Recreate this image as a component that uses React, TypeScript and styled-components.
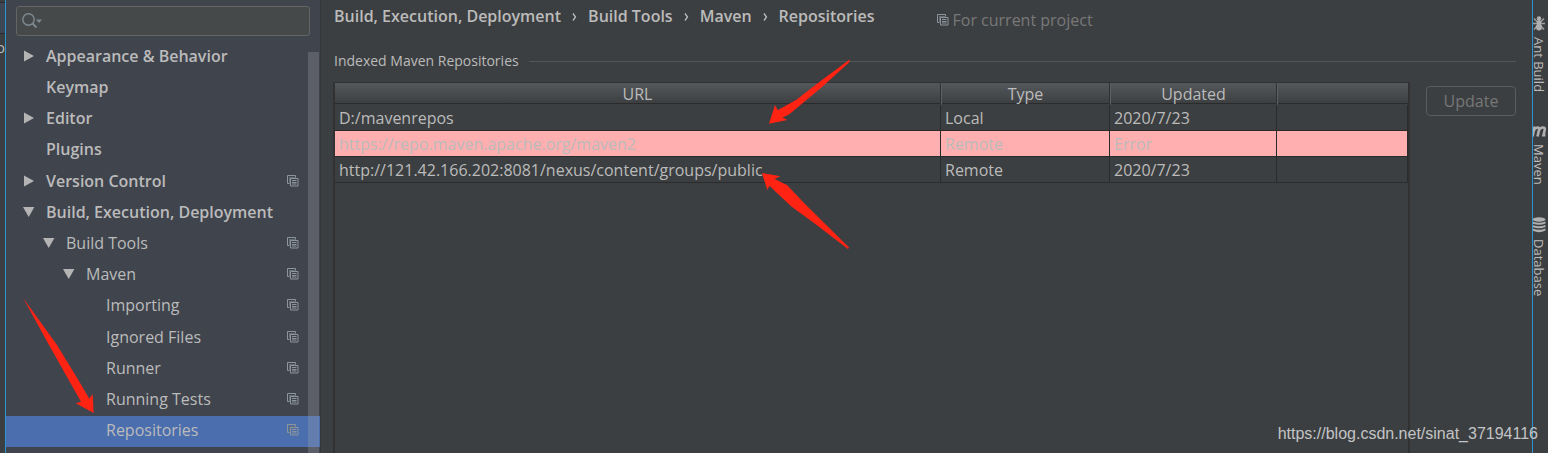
import React from 'react';
import styled, { createGlobalStyle, css } from 'styled-components';

const GlobalStyle = createGlobalStyle`
  *, *::before, *::after { box-sizing: border-box; }
  body {
    margin: 0;
    background: #3c3f41;
    color: #bbbbbb;
    font: 16px/20px "Open Sans", "Noto Sans", sans-serif;
  }
  button, input { font: inherit; color: inherit; }
`;

const Window = styled.div`
  position: relative;
  display: grid;
  grid-template-columns: 5px minmax(0, 1fr) 15px;
  min-height: 100vh;
  overflow: hidden;
`;

const EditorEdge = styled.div`
  padding-top: 2px;
  overflow: hidden;
`;

const EditorTab = styled.div`
  height: 32px;
  background: #3b4754;
  border-top: 1px solid #2b2b2b;
  border-bottom: 1px solid #2b2b2b;
`;

const EditorText = styled.div`
  display: flex;
  justify-content: flex-end;
  margin-top: 4px;
  font-size: 14px;
`;

const Dialog = styled.div`
  display: grid;
  grid-template-columns: 315px minmax(0, 1fr);
  border-left: 1px solid #2d94d2;
  border-right: 1px solid #2d94d2;
`;

const Sidebar = styled.aside`
  position: relative;
  display: flex;
  flex-direction: column;
  gap: 5px;
  padding: 6px 0;
  background: #40444d;
  border-right: 1px solid #353637;
`;

const SearchBox = styled.label`
  display: flex;
  align-items: center;
  height: 30px;
  margin: 0 10px;
  padding: 0 5px;
  background: #45494a;
  border: 1px solid #646464;
  border-radius: 3px;
`;

const SearchInput = styled.input`
  flex: 1;
  min-width: 0;
  border: 0;
  outline: 0;
  background: transparent;
`;

const Tree = styled.ul`
  flex: 1;
  display: grid;
  grid-auto-rows: minmax(31px, 1fr);
  margin: 0;
  padding: 0;
  list-style: none;
`;

const TreeRow = styled.li<{ $level: number; $selected?: boolean }>`
  display: flex;
  align-items: center;
  padding-left: ${p => 17 + p.$level * 20}px;
  padding-right: 21px;
  padding-bottom: 2px;
  font-weight: ${p => (p.$level === 0 ? 600 : 400)};
  ${p => p.$selected && css`background: #4b6eaf;`}
`;

const Toggle = styled.span`
  display: flex;
  width: 23px;
`;

const TreeLabel = styled.span`
  flex: 1;
  white-space: nowrap;
`;

const Scrollbar = styled.div`
  position: absolute;
  top: 52px;
  right: 1px;
  bottom: 0;
  width: 11px;
  background: rgba(166, 166, 176, 0.28);
`;

const Main = styled.main`
  display: flex;
  flex-direction: column;
  padding: 6px 16px 0 12px;
`;

const Heading = styled.header`
  display: flex;
  height: 40px;
  padding-left: 1px;
`;

const Crumbs = styled.ol`
  display: flex;
  margin: 0;
  padding: 0;
  list-style: none;
  font-weight: 600;
`;

const Crumb = styled.li`
  display: flex;
  white-space: nowrap;
`;

const ChevronIcon = styled.svg`
  width: 5px;
  height: 20px;
  margin: 0 11px;
  fill: none;
  stroke: #bbbbbb;
`;

const Scope = styled.span`
  display: flex;
  align-items: center;
  gap: 4px;
  height: 28px;
  margin-left: 62px;
  color: #787878;
  white-space: nowrap;
`;

const SectionTitle = styled.h2`
  display: flex;
  align-items: center;
  gap: 10px;
  height: 30px;
  margin: 0;
  padding-left: 1px;
  font-size: 14px;
  font-weight: 400;
  white-space: nowrap;

  &::after {
    content: '';
    flex: 1;
    height: 1px;
    background: #515658;
  }
`;

const Content = styled.section`
  flex: 1;
  display: grid;
  grid-template-columns: minmax(0, 1fr) 90px;
  gap: 16px;
  margin-top: 6px;
`;

const TablePanel = styled.div`
  position: relative;
  border: 2px solid #323232;
  border-top-width: 1px;
  border-bottom: 0;
`;

const RepoTable = styled.table`
  width: 100%;
  table-layout: fixed;
  border-collapse: separate;
  border-spacing: 0;
`;

const Column = styled.col<{ $width?: number }>`
  width: ${p => (p.$width ? `${p.$width}px` : 'auto')};
`;

const HeadCell = styled.th`
  height: 22px;
  padding: 0;
  line-height: 20px;
  font-weight: 400;
  background: linear-gradient(#54585a, #3c3f41);
  border-right: 1px solid #2f3132;
  border-bottom: 1px solid #3c3f41;
  box-shadow: inset 0 -1px #2b2b2b;

  & + & { border-left: 1px solid #5c6062; }
  &:last-child { border-right: 0; }
`;

const Cell = styled.td`
  height: 26px;
  padding: 0 4px;
  line-height: 20px;
  white-space: nowrap;
  border-right: 1px solid #2b2b2b;
  border-bottom: 1px solid #2b2b2b;
`;

const RepoRow = styled.tr<{ $failed?: boolean }>`
  ${p => p.$failed && css`background: #ffafaf;`}
`;

const UpdateButton = styled.button`
  height: 30px;
  margin-top: 4px;
  padding: 0;
  color: #777777;
  background: transparent;
  border: 1px solid #5a5d5e;
  border-radius: 4px;
`;

const ToolStripe = styled.nav`
  display: flex;
  flex-direction: column;
  gap: 32px;
  padding-top: 16px;
  overflow: hidden;
`;

const ToolButton = styled.button`
  display: flex;
  flex-direction: column;
  align-items: flex-start;
  gap: 6px;
  padding: 0;
  border: 0;
  background: transparent;
  font-size: 13px;
  line-height: 12px;
`;

const ToolName = styled.span`
  writing-mode: vertical-rl;
  white-space: nowrap;
`;

const Arrow = styled.svg<{ $x: number; $y: number }>`
  position: absolute;
  left: ${p => p.$x}px;
  top: ${p => p.$y}px;
  z-index: 1;
  fill: #ff2313;
  pointer-events: none;
`;

const Watermark = styled.div`
  position: absolute;
  right: 10px;
  bottom: 9px;
  color: #c3c4c5;
  font: 16px/20px "Liberation Sans", Arial, sans-serif;
`;

const CopyIcon = () => (
  <svg width="12" height="12" fill="none" stroke="#8d959c" aria-hidden="true">
    <path d="M2.500 8.500h-2v-8h8v2" />
    <path d="M2 2h6v1.500h-4.500v4.500h-1.500z" fill="#656d75" stroke="none" />
    <path d="M3.500 3.500h7.500v7.500h-7.500z" />
    <path d="M5 5.500h4.500M5 7.500h4.500M5 9h4.500" />
  </svg>
);

const SearchIcon = () => (
  <svg width="20" height="16" fill="none" stroke="#7f8b91" aria-hidden="true">
    <circle cx="6.500" cy="6.500" r="5.700" strokeWidth="1.400" />
    <path d="M10.500 10.500l4 4" strokeWidth="1.800" />
    <path d="M14 6.500h6l-3 3.500z" fill="#7f8b91" stroke="none" />
  </svg>
);

const Triangle = ({ open }: { open: boolean }) => (
  <svg width="12" height="12" fill="#b4b4b4" aria-hidden="true">
    <path d={open ? 'M0 1h11.400l-5.700 10z' : 'M1 .5v11l10-5.500z'} />
  </svg>
);

const Chevron = () => (
  <ChevronIcon aria-hidden="true">
    <path d="M1 7.500l2.500 3.500-2.500 3.500" strokeWidth="1.300" />
  </ChevronIcon>
);

const AntIcon = () => (
  <svg width="13" height="15" fill="#b0b0b0" stroke="#a0a0a0" aria-hidden="true">
    <path d="M1 2.500l4 4M11 2.500l-4 4M0 7.500h12M1 13.500l4-4.500M11 13.500l-4-4.500" fill="none" strokeWidth="1.500" />
    <ellipse cx="6" cy="2.500" rx="2.200" ry="2.200" stroke="none" />
    <ellipse cx="6" cy="6.500" rx="2.200" ry="2.500" stroke="none" />
    <ellipse cx="6" cy="11" rx="3" ry="3.500" stroke="none" />
  </svg>
);

const MavenIcon = () => (
  <svg width="14" height="14" fill="none" stroke="#b0b0b0" strokeWidth="2.600" aria-hidden="true">
    <path d="M-.5 12.500l2.200-10M1 6q1.500-2.500 3.500-2.500t1.500 2.500l-1.500 6.500M6 6q1.500-2.500 3.900-2.500t1.800 2.500l-1.200 5.300h1.900" />
  </svg>
);

const DatabaseIcon = () => (
  <svg width="13" height="16" fill="#b0b0b0" aria-hidden="true">
    <ellipse cx="6" cy="2.500" rx="6.500" ry="2.200" />
    <path d="M-.5 4.500q6.500 2.500 13 0v2q-6.500 2.700-13 0zM-.5 8q6.500 2.500 13 0v2q-6.500 2.700-13 0zM-.5 11.500q6.500 2.500 13 0v2q-6.500 3.500-13 0z" />
  </svg>
);

interface Node {
  label: string;
  level: number;
  open?: boolean;
  perProject?: boolean;
  selected?: boolean;
}

const nodes: Node[] = [
  { label: 'Appearance & Behavior', level: 0, open: false },
  { label: 'Keymap', level: 0 },
  { label: 'Editor', level: 0, open: false },
  { label: 'Plugins', level: 0 },
  { label: 'Version Control', level: 0, open: false, perProject: true },
  { label: 'Build, Execution, Deployment', level: 0, open: true },
  { label: 'Build Tools', level: 1, open: true, perProject: true },
  { label: 'Maven', level: 2, open: true, perProject: true },
  { label: 'Importing', level: 3, perProject: true },
  { label: 'Ignored Files', level: 3, perProject: true },
  { label: 'Runner', level: 3, perProject: true },
  { label: 'Running Tests', level: 3, perProject: true },
  { label: 'Repositories', level: 3, perProject: true, selected: true },
];

const crumbs = ['Build, Execution, Deployment', 'Build Tools', 'Maven', 'Repositories'];

const repositories = [
  { url: 'D:/mavenrepos', type: 'Local', updated: '2020/7/23' },
  { url: 'https://repo.maven.apache.org/maven2', type: 'Remote', updated: 'Error', failed: true },
  { url: 'http://121.42.166.202:8081/nexus/content/groups/public', type: 'Remote', updated: '2020/7/23' },
];

const tools = [
  { name: 'Ant Build', icon: <AntIcon /> },
  { name: 'Maven', icon: <MavenIcon /> },
  { name: 'Database', icon: <DatabaseIcon /> },
];

export default function App() {
  return (
    <Window>
      <GlobalStyle />
      <EditorEdge>
        <EditorTab />
        <EditorText>o</EditorText>
      </EditorEdge>
      <Dialog>
        <Sidebar>
          <SearchBox>
            <SearchIcon />
            <SearchInput type="text" aria-label="Search settings" />
          </SearchBox>
          <Tree>
            {nodes.map(node => (
              <TreeRow key={node.label} $level={node.level} $selected={node.selected}>
                <Toggle>{node.open !== undefined && <Triangle open={node.open} />}</Toggle>
                <TreeLabel>{node.label}</TreeLabel>
                {node.perProject && <CopyIcon />}
              </TreeRow>
            ))}
          </Tree>
          <Scrollbar />
          <Arrow $x={16} $y={296} width="74" height="120" aria-hidden="true">
            <path d="M1 1.700L35 49L58 86.700L67.300 102.700L70.700 98L71.700 117L53.700 107.300L59 105.700L27 49z" />
          </Arrow>
        </Sidebar>
        <Main>
          <Heading>
            <Crumbs>
              {crumbs.map((crumb, i) => (
                <Crumb key={crumb}>
                  {i > 0 && <Chevron />}
                  {crumb}
                </Crumb>
              ))}
            </Crumbs>
            <Scope>
              <CopyIcon />
              For current project
            </Scope>
          </Heading>
          <SectionTitle>Indexed Maven Repositories</SectionTitle>
          <Content>
            <TablePanel>
              <RepoTable>
                <colgroup>
                  <Column />
                  <Column $width={169} />
                  <Column $width={167} />
                  <Column $width={131} />
                </colgroup>
                <thead>
                  <tr>
                    <HeadCell>URL</HeadCell>
                    <HeadCell>Type</HeadCell>
                    <HeadCell>Updated</HeadCell>
                    <HeadCell />
                  </tr>
                </thead>
                <tbody>
                  {repositories.map(repo => (
                    <RepoRow key={repo.url} $failed={repo.failed}>
                      <Cell>{repo.url}</Cell>
                      <Cell>{repo.type}</Cell>
                      <Cell>{repo.updated}</Cell>
                      <Cell />
                    </RepoRow>
                  ))}
                </tbody>
              </RepoTable>
              <Arrow $x={433} $y={-25} width="84" height="68" aria-hidden="true">
                <path d="M81 2L82 2.300L81 4.500L54 29L21 56.500L14.500 59.500L19.300 62L1 65.700L7 47L9.700 52.300L28 42L52 23.500z" />
              </Arrow>
              <Arrow $x={425} $y={88} width="92" height="80" aria-hidden="true">
                <path d="M2 2L20.300 5.300L14.500 8L27 14L44 32L89 76.500L88 78L54 52L32 36L17 22L9.500 14.700L7.300 19z" />
              </Arrow>
            </TablePanel>
            <UpdateButton type="button" disabled>Update</UpdateButton>
          </Content>
        </Main>
      </Dialog>
      <ToolStripe>
        {tools.map(tool => (
          <ToolButton key={tool.name} type="button">
            {tool.icon}
            <ToolName>{tool.name}</ToolName>
          </ToolButton>
        ))}
      </ToolStripe>
      <Watermark>https://blog.csdn.net/sinat_37194116</Watermark>
    </Window>
  );
}
